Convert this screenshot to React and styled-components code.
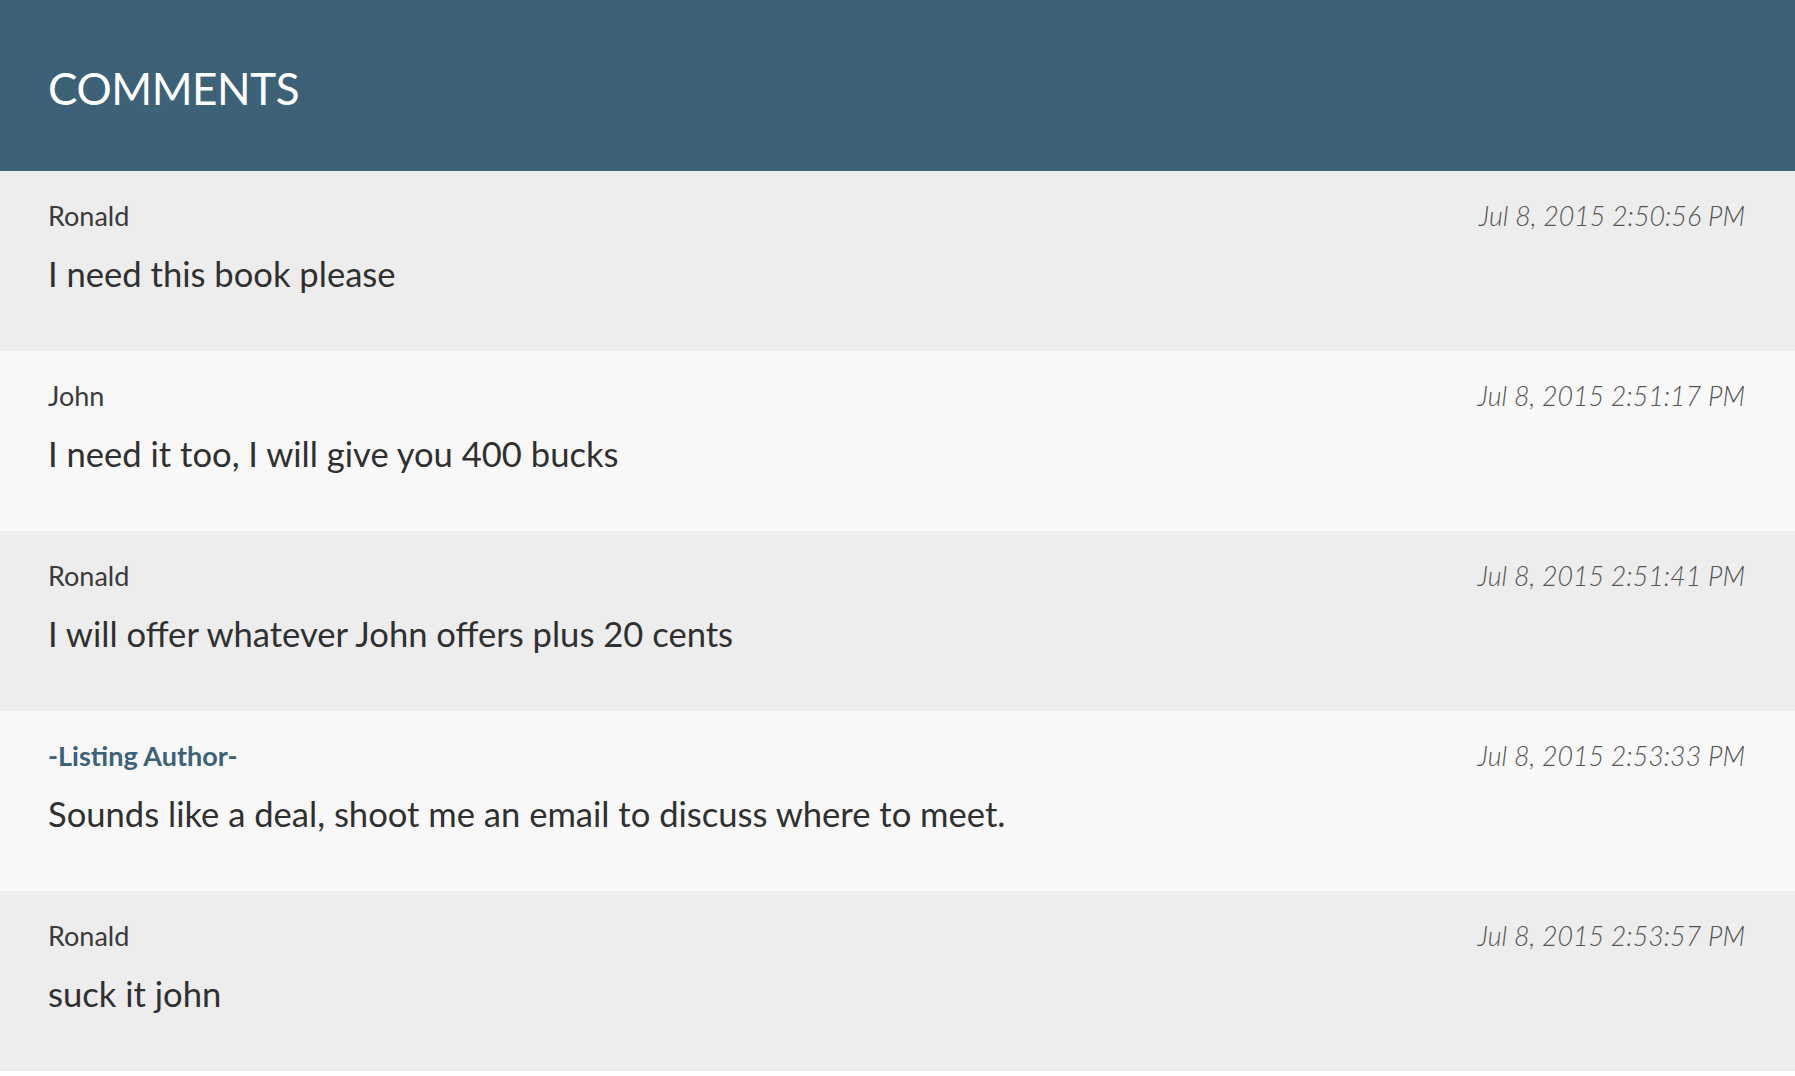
import React from 'react';
import styled, { createGlobalStyle } from 'styled-components';

const GlobalStyle = createGlobalStyle`
  html, body {
    margin: 0;
    padding: 0;
    background: #ffffff;
  }
  body {
    font-family: Lato, "Open Sans", "Liberation Sans", sans-serif;
    color: #333333;
    -webkit-font-smoothing: antialiased;
  }
  * {
    box-sizing: border-box;
  }
`;

const StyledComments = styled.section`
  width: 100%;
`;

const Header = styled.header`
  height: 171px;
  padding: 66px 48px 0;
  background: #3d6278;
`;

const Title = styled.h1`
  margin: 0;
  font-size: 44px;
  line-height: 44px;
  font-weight: 400;
  color: #ffffff;
  letter-spacing: -0.4px;
`;

const Row = styled.article`
  height: 180px;
  padding: 29px 50px 0 48px;
  background: ${(p) => (p.$alt ? '#f8f8f8' : '#ededed')};
`;

const Meta = styled.div`
  display: flex;
  justify-content: space-between;
  align-items: baseline;
  line-height: 32px;
`;

const Name = styled.span`
  font-size: 27px;
  color: ${(p) => (p.$author ? '#3d6278' : '#3a3a3a')};
  font-weight: ${(p) => (p.$author ? 700 : 400)};
`;

const Stamp = styled.time`
  font-size: 26.8px;
  font-style: italic;
  font-weight: 300;
  color: #555555;
`;

const Body = styled.p`
  margin: 21px 0 0;
  font-size: 34.6px;
  line-height: 42px;
  color: #303030;
`;

const comments = [
  { name: 'Ronald', date: 'Jul 8, 2015 2:50:56 PM', text: 'I need this book please' },
  { name: 'John', date: 'Jul 8, 2015 2:51:17 PM', text: 'I need it too, I will give you 400 bucks' },
  { name: 'Ronald', date: 'Jul 8, 2015 2:51:41 PM', text: 'I will offer whatever John offers plus 20 cents' },
  {
    name: '-Listing Author-',
    author: true,
    date: 'Jul 8, 2015 2:53:33 PM',
    text: 'Sounds like a deal, shoot me an email to discuss where to meet.',
  },
  { name: 'Ronald', date: 'Jul 8, 2015 2:53:57 PM', text: 'suck it john' },
];

const App = () => {
  return (
    <StyledComments>
      <GlobalStyle />
      <Header>
        <Title>COMMENTS</Title>
      </Header>
      {comments.map((c, idx) => (
        <Row key={idx} $alt={idx % 2 === 1}>
          <Meta>
            <Name $author={c.author}>{c.name}</Name>
            <Stamp>{c.date}</Stamp>
          </Meta>
          <Body>{c.text}</Body>
        </Row>
      ))}
    </StyledComments>
  );
};

export default App;
